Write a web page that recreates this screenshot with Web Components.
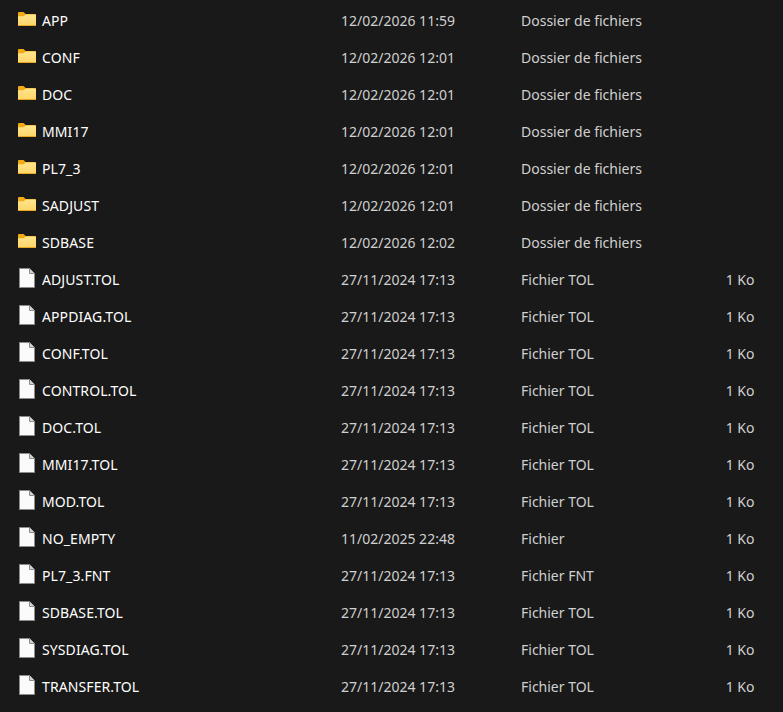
<!DOCTYPE html>
<html lang="fr">
  <head>
    <meta charset="UTF-8" />
    <title>Explorateur</title>
    <style>
      html,
      body {
        margin: 0;
        height: 100%;
        background: #191919;
      }
      body {
        font-family: "Noto Sans", "Open Sans", sans-serif;
        font-size: 14px;
        color: #fff;
        overflow: hidden;
      }
    </style>
  </head>
  <body>
    <template id="file-list">
      <style>
        :host {
          display: flex;
          flex-direction: column;
          padding-top: 2px;
        }
      </style>
      <slot></slot>
    </template>

    <template id="file-row">
      <style>
        :host {
          display: grid;
          grid-template-columns: 24px 299px 180px 160px 73.5px;
          align-items: center;
          height: 37px;
          padding-left: 18px;
          line-height: 37px;
          white-space: nowrap;
        }
        #icon {
          margin-bottom: 3px;
          line-height: 0;
        }
        #name {
          letter-spacing: 0.1px;
        }
        #date,
        #type,
        #size {
          color: #d0d0d0;
        }
        #size {
          text-align: right;
        }
        svg {
          display: block;
        }
      </style>
      <div id="icon"></div>
      <div id="name"><slot></slot></div>
      <div id="date"></div>
      <div id="type"></div>
      <div id="size"></div>
    </template>

    <file-list>
      <file-row kind="folder" date="12/02/2026 11:59" type="Dossier de fichiers">APP</file-row>
      <file-row kind="folder" date="12/02/2026 12:01" type="Dossier de fichiers">CONF</file-row>
      <file-row kind="folder" date="12/02/2026 12:01" type="Dossier de fichiers">DOC</file-row>
      <file-row kind="folder" date="12/02/2026 12:01" type="Dossier de fichiers">MMI17</file-row>
      <file-row kind="folder" date="12/02/2026 12:01" type="Dossier de fichiers">PL7_3</file-row>
      <file-row kind="folder" date="12/02/2026 12:01" type="Dossier de fichiers">SADJUST</file-row>
      <file-row kind="folder" date="12/02/2026 12:02" type="Dossier de fichiers">SDBASE</file-row>
      <file-row date="27/11/2024 17:13" type="Fichier TOL" size="1 Ko">ADJUST.TOL</file-row>
      <file-row date="27/11/2024 17:13" type="Fichier TOL" size="1 Ko">APPDIAG.TOL</file-row>
      <file-row date="27/11/2024 17:13" type="Fichier TOL" size="1 Ko">CONF.TOL</file-row>
      <file-row date="27/11/2024 17:13" type="Fichier TOL" size="1 Ko">CONTROL.TOL</file-row>
      <file-row date="27/11/2024 17:13" type="Fichier TOL" size="1 Ko">DOC.TOL</file-row>
      <file-row date="27/11/2024 17:13" type="Fichier TOL" size="1 Ko">MMI17.TOL</file-row>
      <file-row date="27/11/2024 17:13" type="Fichier TOL" size="1 Ko">MOD.TOL</file-row>
      <file-row date="11/02/2025 22:48" type="Fichier" size="1 Ko">NO_EMPTY</file-row>
      <file-row date="27/11/2024 17:13" type="Fichier FNT" size="1 Ko">PL7_3.FNT</file-row>
      <file-row date="27/11/2024 17:13" type="Fichier TOL" size="1 Ko">SDBASE.TOL</file-row>
      <file-row date="27/11/2024 17:13" type="Fichier TOL" size="1 Ko">SYSDIAG.TOL</file-row>
      <file-row date="27/11/2024 17:13" type="Fichier TOL" size="1 Ko">TRANSFER.TOL</file-row>
    </file-list>

    <script>
      const ICONS = {
        folder: `<svg width="18" height="14" viewBox="0 0 18 14">
          <defs><linearGradient id="g" x1="0" y1="0" x2="0" y2="1">
            <stop offset="0" stop-color="#ffe58c" /><stop offset="1" stop-color="#ffd569" />
          </linearGradient></defs>
          <path d="M0 1a1 1 0 0 1 1-1h4.5l2.2 2H17a1 1 0 0 1 1 1v2H0z" fill="#f2ab14" />
          <path d="M0 4.2h5.6l2.4-1.7h9.2a.8.8 0 0 1 .8.8V13a1 1 0 0 1-1 1H1a1 1 0 0 1-1-1z" fill="url(#g)" />
          <path d="M0 13h18a1 1 0 0 1-1 1H1a1 1 0 0 1-1-1z" fill="#e8a81f" />
        </svg>`,
        file: `<svg width="16" height="20" viewBox="0 0 16 20" style="margin-left:1px">
          <path d="M.5 .5h10l5 5v14H.5z" fill="#fbfbfb" stroke="#8c8c8c" />
          <path d="M10.5 .5v5h5" fill="#d4d4d4" stroke="#8c8c8c" />
        </svg>`,
      };

      class FileList extends HTMLElement {
        constructor() {
          super();
          const content = document.getElementById("file-list").content;
          this.attachShadow({ mode: "open" }).appendChild(content.cloneNode(true));
        }
      }

      class FileRow extends HTMLElement {
        constructor() {
          super();
          const content = document.getElementById("file-row").content;
          this.attachShadow({ mode: "open" }).appendChild(content.cloneNode(true));
        }

        connectedCallback() {
          const root = this.shadowRoot;
          root.getElementById("icon").innerHTML = ICONS[this.getAttribute("kind") || "file"];
          root.getElementById("date").textContent = this.getAttribute("date");
          root.getElementById("type").textContent = this.getAttribute("type");
          root.getElementById("size").textContent = this.getAttribute("size") || "";
        }
      }

      customElements.define("file-list", FileList);
      customElements.define("file-row", FileRow);
    </script>
  </body>
</html>
